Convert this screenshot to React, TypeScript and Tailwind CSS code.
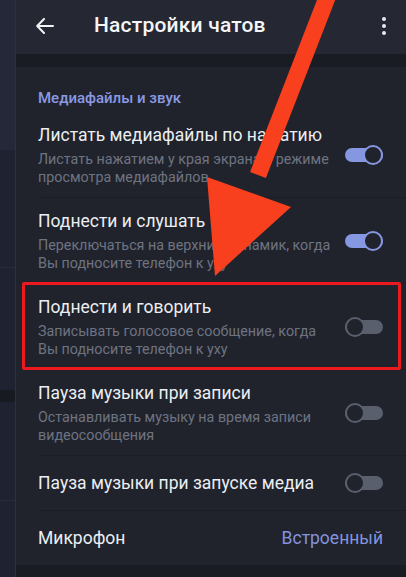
import { Fragment } from 'react';

type Row = {
  title: string;
  subtitle?: string[];
  toggle?: boolean;
  value?: string;
};

const rows: Row[] = [
  {
    title: 'Листать медиафайлы по нажатию',
    subtitle: ['Листать нажатием у края экрана в режиме', 'просмотра медиафайлов'],
    toggle: true,
  },
  {
    title: 'Поднести и слушать',
    subtitle: ['Переключаться на верхний динамик, когда', 'Вы подносите телефон к уху'],
    toggle: true,
  },
  {
    title: 'Поднести и говорить',
    subtitle: ['Записывать голосовое сообщение, когда', 'Вы подносите телефон к уху'],
    toggle: false,
  },
  {
    title: 'Пауза музыки при записи',
    subtitle: ['Останавливать музыку на время записи', 'видеосообщения'],
    toggle: false,
  },
  { title: 'Пауза музыки при запуске медиа', toggle: false },
  { title: 'Микрофон', value: 'Встроенный' },
];

function Toggle({ on }: { on: boolean }) {
  return (
    <div className="relative w-[38px] h-[20px] flex items-center shrink-0">
      <div className={`w-full h-[14px] rounded-full ${on ? 'bg-[#8697e2]' : 'bg-[#5a5f6e]'}`} />
      <div
        className={`absolute top-0 w-[20px] h-[20px] rounded-full bg-[#20232c] border-[2.5px] ${
          on ? 'right-0 border-[#8697e2]' : 'left-0 border-[#5a5f6e]'
        }`}
      />
    </div>
  );
}

function SettingRow({ row }: { row: Row }) {
  const twoLine = !!row.subtitle;
  return (
    <div
      className={`flex items-center pl-[22px] pr-[23px] ${twoLine ? 'h-[85px]' : 'h-[54px]'}`}
    >
      <div className="flex-1 min-w-0">
        <div className="text-[17.5px] leading-[22px] text-[#eceef2] whitespace-nowrap">{row.title}</div>
        {row.subtitle && (
          <div className="mt-[4px] text-[14.3px] leading-[18px] text-[#6e7382] whitespace-nowrap">
            {row.subtitle.map((line) => (
              <div key={line}>{line}</div>
            ))}
          </div>
        )}
      </div>
      {row.toggle !== undefined && <Toggle on={row.toggle} />}
      {row.value && <div className="text-[17.5px] text-[#8394df]">{row.value}</div>}
    </div>
  );
}

export default function App() {
  return (
    <div
      className="relative w-[406px] h-[577px] overflow-hidden flex bg-[#20232c]"
      style={{ fontFamily: 'Roboto, "Noto Sans", sans-serif' }}
    >
      {/* edge of the previous screen peeking out */}
      <div className="w-[15px] shrink-0 flex flex-col bg-[#1f2230]">
        <div className="h-[150px] bg-[#242838]" />
        <div className="h-[117px]" />
        <div className="h-px bg-[#2a2e3c]" />
        <div className="h-[122px]" />
        <div className="h-[12px] bg-[#181a22]" />
        <div className="h-[98px]" />
        <div className="h-px bg-[#2a2e3c]" />
      </div>
      <div className="w-px shrink-0 bg-[#2d313d]" />

      <div className="flex-1 flex flex-col">
        {/* toolbar */}
        <div className="h-[54px] shrink-0 bg-[#252833] flex items-center pl-[20px] pr-[20px] pb-[3px]">
          <svg width="18" height="16" viewBox="0 0 18 16" fill="none" stroke="#f2f3f5" strokeWidth="2" strokeLinecap="round" strokeLinejoin="round">
            <path d="M17 8H1.5M8 1 1.2 8 8 15" />
          </svg>
          <div className="ml-[40px] text-[21px] font-medium text-[#f4f5f7] tracking-[0.2px]">Настройки чатов</div>
          <div className="ml-auto flex flex-col gap-[3px] items-center">
            <span className="w-[4px] h-[4px] rounded-full bg-[#e8e9ec]" />
            <span className="w-[4px] h-[4px] rounded-full bg-[#e8e9ec]" />
            <span className="w-[4px] h-[4px] rounded-full bg-[#e8e9ec]" />
          </div>
        </div>
        <div className="h-[13px] shrink-0 bg-[#1a1c23]" />

        {/* media and sound section */}
        <div className="flex flex-col bg-[#20232c]">
          <div className="pt-[21px] pl-[22px] h-[45px] text-[15px] leading-[20px] font-medium text-[#8b99e4]">
            Медиафайлы и звук
          </div>
          {rows.map((row, i) => (
            <Fragment key={row.title}>
              {i > 0 && <div className="h-px ml-[22px] bg-[#1b1d25]" />}
              <SettingRow row={row} />
            </Fragment>
          ))}
        </div>
        <div className="flex-1 bg-[#1a1c23]" />
      </div>

      {/* highlight frame */}
      <div className="absolute left-[22px] top-[282px] w-[379px] h-[88px] border-[3px] border-[#ec1a1f] rounded-[2px]" />

      {/* pointer arrow */}
      <svg className="absolute left-0 top-0" width="406" height="577" viewBox="0 0 406 577">
        <line x1="330" y1="-10" x2="258" y2="175" stroke="#f8401f" strokeWidth="17" />
        <polygon points="207,177 291,207 215,276" fill="#f8401f" />
      </svg>
    </div>
  );
}
